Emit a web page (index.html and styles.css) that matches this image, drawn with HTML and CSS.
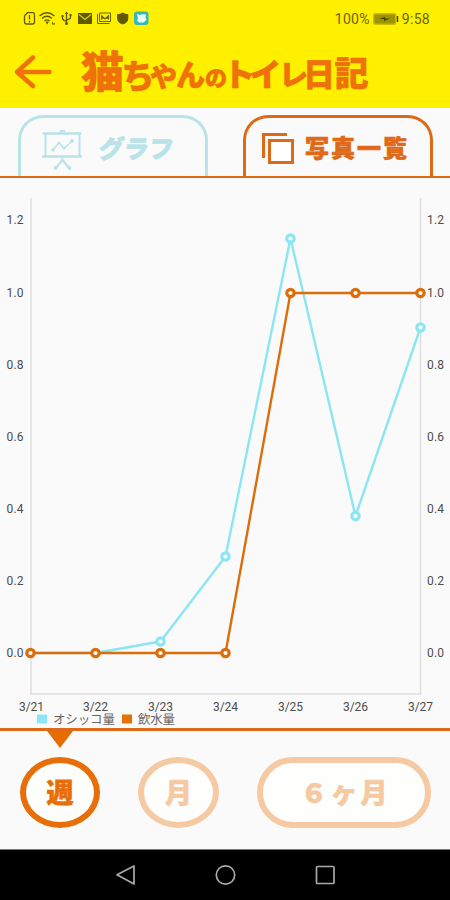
FILE: index.html
```html
<!DOCTYPE html>
<html lang="ja">
<head>
<meta charset="utf-8">
<title>猫ちゃんのトイレ日記</title>
<link rel="stylesheet" href="styles.css">
</head>
<body>
<div class="app">
  <header class="header">
    <div class="status">
      <svg class="status-icons" width="130" height="18" viewBox="22 10 130 18">
        <g fill="none" stroke="#5f5a00" stroke-width="1.3">
          <path d="M27.5 12.7h5.2q1.8 0 1.8 1.8v7.7q0 1.800-1.800 1.800h-6.400q-1.800 0-1.800-1.800v-6.500zM29.500 15v4.500M29.500 20.800v1.600"/>
          <path d="M39.500 16q7.500-6.500 15 0M42 18.500q5-4.500 10 0M44.500 21q2.500-2.300 5 0"/>
          <path d="M66.500 13v10M62.500 16v2.500q0 1.500 4 3M70.500 15v2.500q0 1.500-4 2.500"/>
        </g>
        <g fill="#5f5a00">
          <path d="M45.500 21.500h3.400l-1.700 3zM52 21.500l2 2.500 1-1.500v2h-3zM64.700 14l1.800-2.500 1.800 2.500zM61.500 15h2v2h-2zM69.500 14h2v2h-2z"/>
          <circle cx="66.500" cy="23.500" r="1.500"/>
          <path d="M78 13h14v11H78zM122.700 12.600q2.600 1.600 5.600 1.600v4.300q0 4-5.600 6-5.600-2-5.600-6v-4.300q3 0 5.600-1.600z"/>
        </g>
        <path d="M79 14.500l6 5 6-5" fill="none" stroke="#ddd400" stroke-width="1.200"/>
        <path d="M97.500 14v9.500h12M99.500 13h11v8.500h-11z" fill="none" stroke="#6b6500"/>
        <path d="M101 20v-5.500l4 3.500 4-3.500V20l-2-1.500-2 1-2-1z" fill="#6b6500"/>
        <rect x="134" y="11.500" width="14.500" height="13.500" rx="3" fill="#38b8b5"/>
        <path d="M137 14l3 1 2.500-.8 3.500.2-.5 3 1 2.500-3 2.700h-4.500l-2-2.200 1-2z" fill="#e9fff6"/>
      </svg>
      <div class="status-right">
        <span>100%</span>
        <svg width="26" height="12" viewBox="0 0 26 12"><rect x=".7" y=".7" width="22" height="10.500" rx="1.500" fill="#9b9300" stroke="#c9bd00" stroke-width="1.500"/><path d="M6 6l6-2v1.500h5l-6 2.500V6z" fill="#474300"/><path d="M24.500 3v6" stroke="#474300" stroke-width="1.500"/></svg>
        <span>9:58</span>
      </div>
    </div>
    <div class="title-row">
      <svg class="back" width="40" height="36" viewBox="13 54 40 36"><path d="M49.500 72H17M33 57.500L17 72l16 14" fill="none" stroke="#ee7208" stroke-width="4.600" stroke-linecap="round" stroke-linejoin="round"/></svg>
      <h1 class="title">
        <svg width="292" height="60" viewBox="80 48 292 60">
          <text class="title-text"><tspan x="81" y="88" font-size="43">猫</tspan><tspan x="121.500" y="87.500" font-size="33">ち</tspan><tspan x="150" y="87" font-size="27">や</tspan><tspan x="176" y="86" font-size="29">ん</tspan><tspan x="205" y="86" font-size="22">の</tspan><tspan x="223" y="86" font-size="32">ト</tspan><tspan x="249.500" y="86" font-size="32">イ</tspan><tspan x="279" y="86" font-size="29">レ</tspan><tspan x="303" y="86" font-size="32">日</tspan><tspan x="334.500" y="86" font-size="34">記</tspan></text>
        </svg>
      </h1>
    </div>
  </header>

  <nav class="tabs">
    <div class="tab tab-graph">
      <svg width="42" height="42" viewBox="42 130 42 42">
        <g fill="none" stroke="#b9e3e8" stroke-width="2">
          <path d="M42.500 133.500h39M42 156.500h40" stroke-width="2.600"/>
          <path d="M45.500 133v23M79.500 133v23M62.500 158v2l-7 8.500M62.500 160l7 8.500M60 132q2.500-3 5 0"/>
          <path d="M53 150l6-7.500 5 6 8-7.500" stroke-width="1.500"/>
        </g>
        <g fill="#b9e3e8"><circle cx="53" cy="150" r="1.700"/><circle cx="59" cy="143" r="1.500"/><circle cx="64" cy="148" r="1.500"/><circle cx="72" cy="141" r="1.900"/><circle cx="55.500" cy="168" r="1.900"/><circle cx="69.500" cy="168" r="1.900"/></g>
      </svg>
      <span class="tab-label label-graph">グラフ</span>
    </div>
    <div class="tab tab-photos">
      <svg width="34" height="34" viewBox="261 132 34 34"><path d="M263.500 158v-23.500H287" fill="none" stroke="#df6917" stroke-width="3"/><rect x="269.500" y="140.500" width="23" height="22" fill="#fff" stroke="#df6917" stroke-width="3"/></svg>
      <span class="tab-label label-photos">写真一覧</span>
    </div>
  </nav>

  <main class="chart">
    <svg width="450" height="550" viewBox="0 178 450 550">
      <path d="M31 198V694.500M420.500 198V694.500M30 694H421" fill="none" stroke="#dedede" stroke-width="1.500"/>
      <g class="axis">
        <text x="6.500" y="224">1.2</text><text x="6.500" y="296.500">1.0</text><text x="6.500" y="368.500">0.8</text><text x="6.500" y="440.500">0.6</text><text x="6.500" y="512.500">0.4</text><text x="6.500" y="584.500">0.2</text><text x="6.500" y="657">0.0</text>
        <text x="427" y="224">1.2</text><text x="427" y="296.500">1.0</text><text x="427" y="368.500">0.8</text><text x="427" y="440.500">0.6</text><text x="427" y="512.500">0.4</text><text x="427" y="584.500">0.2</text><text x="427" y="657">0.0</text>
      </g>
      <g class="axis dates">
        <text x="31.500" y="710.500">3/21</text><text x="95.500" y="710.500">3/22</text><text x="160.500" y="710.500">3/23</text><text x="225.500" y="710.500">3/24</text><text x="290.500" y="710.500">3/25</text><text x="355.500" y="710.500">3/26</text><text x="420.500" y="710.500">3/27</text>
      </g>
      <g class="series blue">
        <path d="M30.500 653H95.500L160.500 641.500L225.500 556.500L290.500 238.500L355.500 516L420.500 327.500"/>
        <circle cx="160.500" cy="641.500" r="3.700"/><circle cx="225.500" cy="556.500" r="3.700"/><circle cx="290.500" cy="238.500" r="3.700"/><circle cx="355.500" cy="516" r="3.700"/><circle cx="420.500" cy="327.500" r="3.700"/>
      </g>
      <g class="series orange">
        <path d="M30.500 653H225.500L290.500 293H420.500"/>
        <circle cx="30.500" cy="653" r="3.700"/><circle cx="95.500" cy="653" r="3.700"/><circle cx="160.500" cy="653" r="3.700"/><circle cx="225.500" cy="653" r="3.700"/><circle cx="290.500" cy="293" r="3.700"/><circle cx="355.500" cy="293" r="3.700"/><circle cx="420.500" cy="293" r="3.700"/>
      </g>
      <rect x="37" y="714.500" width="10" height="9" fill="#8be6fa"/>
      <text class="legend" x="53" y="724" textLength="62">オシッコ量</text>
      <rect x="122" y="714.500" width="10" height="9" fill="#e57207"/>
      <text class="legend" x="138" y="724" textLength="37">飲水量</text>
    </svg>
  </main>

  <section class="periods">
    <svg class="pointer" width="26" height="17" viewBox="0 0 26 17"><path d="M0 0h26L13 17z" fill="#e66b00"/></svg>
    <div class="period-row">
      <button class="period week">週</button>
      <button class="period month">月</button>
      <button class="period half"><span>６</span><span class="small-ke">ヶ</span><span>月</span></button>
    </div>
  </section>

  <footer class="navbar">
    <svg width="220" height="24" viewBox="115 863 220 24" fill="none" stroke="#aaa" stroke-width="1.700" stroke-linejoin="round"><path d="M117 874.800L134 866v18z"/><circle cx="225.500" cy="875" r="9.200"/><rect x="316.500" y="866.500" width="17.500" height="17" rx="1"/></svg>
  </footer>
</div>
</body>
</html>
```
FILE: styles.css
```css
* { box-sizing: border-box; }
body { margin: 0; background: #fafafa; font-family: Roboto, "Noto Sans CJK JP", sans-serif; }
.app { width: 450px; height: 900px; display: flex; flex-direction: column; overflow: hidden; background: #fafafa; }
svg { display: block; flex: none; }

.header { height: 108px; background: #fff000; }
.status { display: flex; justify-content: space-between; height: 48px; padding: 10px 20px 0 22px; }
.status-right { display: flex; align-items: center; gap: 3px; height: 18px; font-size: 14px; letter-spacing: .3px; color: #696400; }
.title-row { display: flex; padding-left: 13px; }
.back { margin-top: 6px; }
.title { margin: 0 0 0 27px; }
.title svg { overflow: visible; }
.title-text { font-family: "Noto Sans CJK JP", sans-serif; font-weight: 900; fill: #ee7208; stroke: #ee7208; stroke-width: .6; stroke-linejoin: round; }

.tabs { display: flex; justify-content: space-between; height: 70px; padding: 7px 17px 0 18px; border-bottom: 2px solid #df6917; }
.tab { display: flex; width: 190px; height: 61px; border: 3px solid; border-bottom: 0; border-radius: 25px 25px 0 0; }
.tab-graph { color: #b9e3e8; padding: 12px 0 0 21px; }
.tab-photos { color: #df6917; padding: 14px 0 0 15px; }
.tab-label { font-family: "Noto Sans CJK JP", sans-serif; font-weight: 900; line-height: 30px; -webkit-text-stroke: .7px currentColor; white-space: nowrap; }
.label-graph { font-size: 25px; margin: 2px 0 0 14px; transform: skewX(-8deg); }
.label-photos { font-size: 24px; letter-spacing: 2px; margin: 0 0 0 10px; }

.chart { height: 550px; }
.axis text { font-family: Roboto, sans-serif; font-size: 12px; fill: #4c4c4c; letter-spacing: .2px; }
.axis.dates text { text-anchor: middle; letter-spacing: 0; }
.legend { font-family: "Noto Sans CJK JP", sans-serif; font-size: 12.5px; fill: #666; }
.series path { fill: none; stroke-width: 2.4; stroke-linejoin: round; }
.series circle { fill: #fff; stroke-width: 3.2; }
.blue { stroke: #8be6f4; }
.orange { stroke: #dc6d0b; }

.periods { height: 121px; border-top: 3px solid #df6917; }
.pointer { margin-left: 47px; }
.period-row { display: flex; margin: 9px 0 0 20px; }
.period { display: flex; align-items: center; justify-content: center; height: 71px; padding: 0 0 3px; background: #fefefd; border: 6px solid #e76e08; border-radius: 50%; color: #e76e08; font-family: "Noto Sans CJK JP", sans-serif; font-weight: 900; font-size: 27px; -webkit-text-stroke: .6px currentColor; }
.week { width: 80px; }
.month { width: 81px; margin-left: 38px; border-color: #f5c9a1; color: #f5c9a1; }
.half { width: 174px; gap: 3px; margin-left: 38px; border-color: #f5c9a1; color: #f5c9a1; border-radius: 37px; }

.navbar { height: 51px; background: #000; border-top: 1px solid #777; display: flex; justify-content: center; padding-top: 13px; }
```
